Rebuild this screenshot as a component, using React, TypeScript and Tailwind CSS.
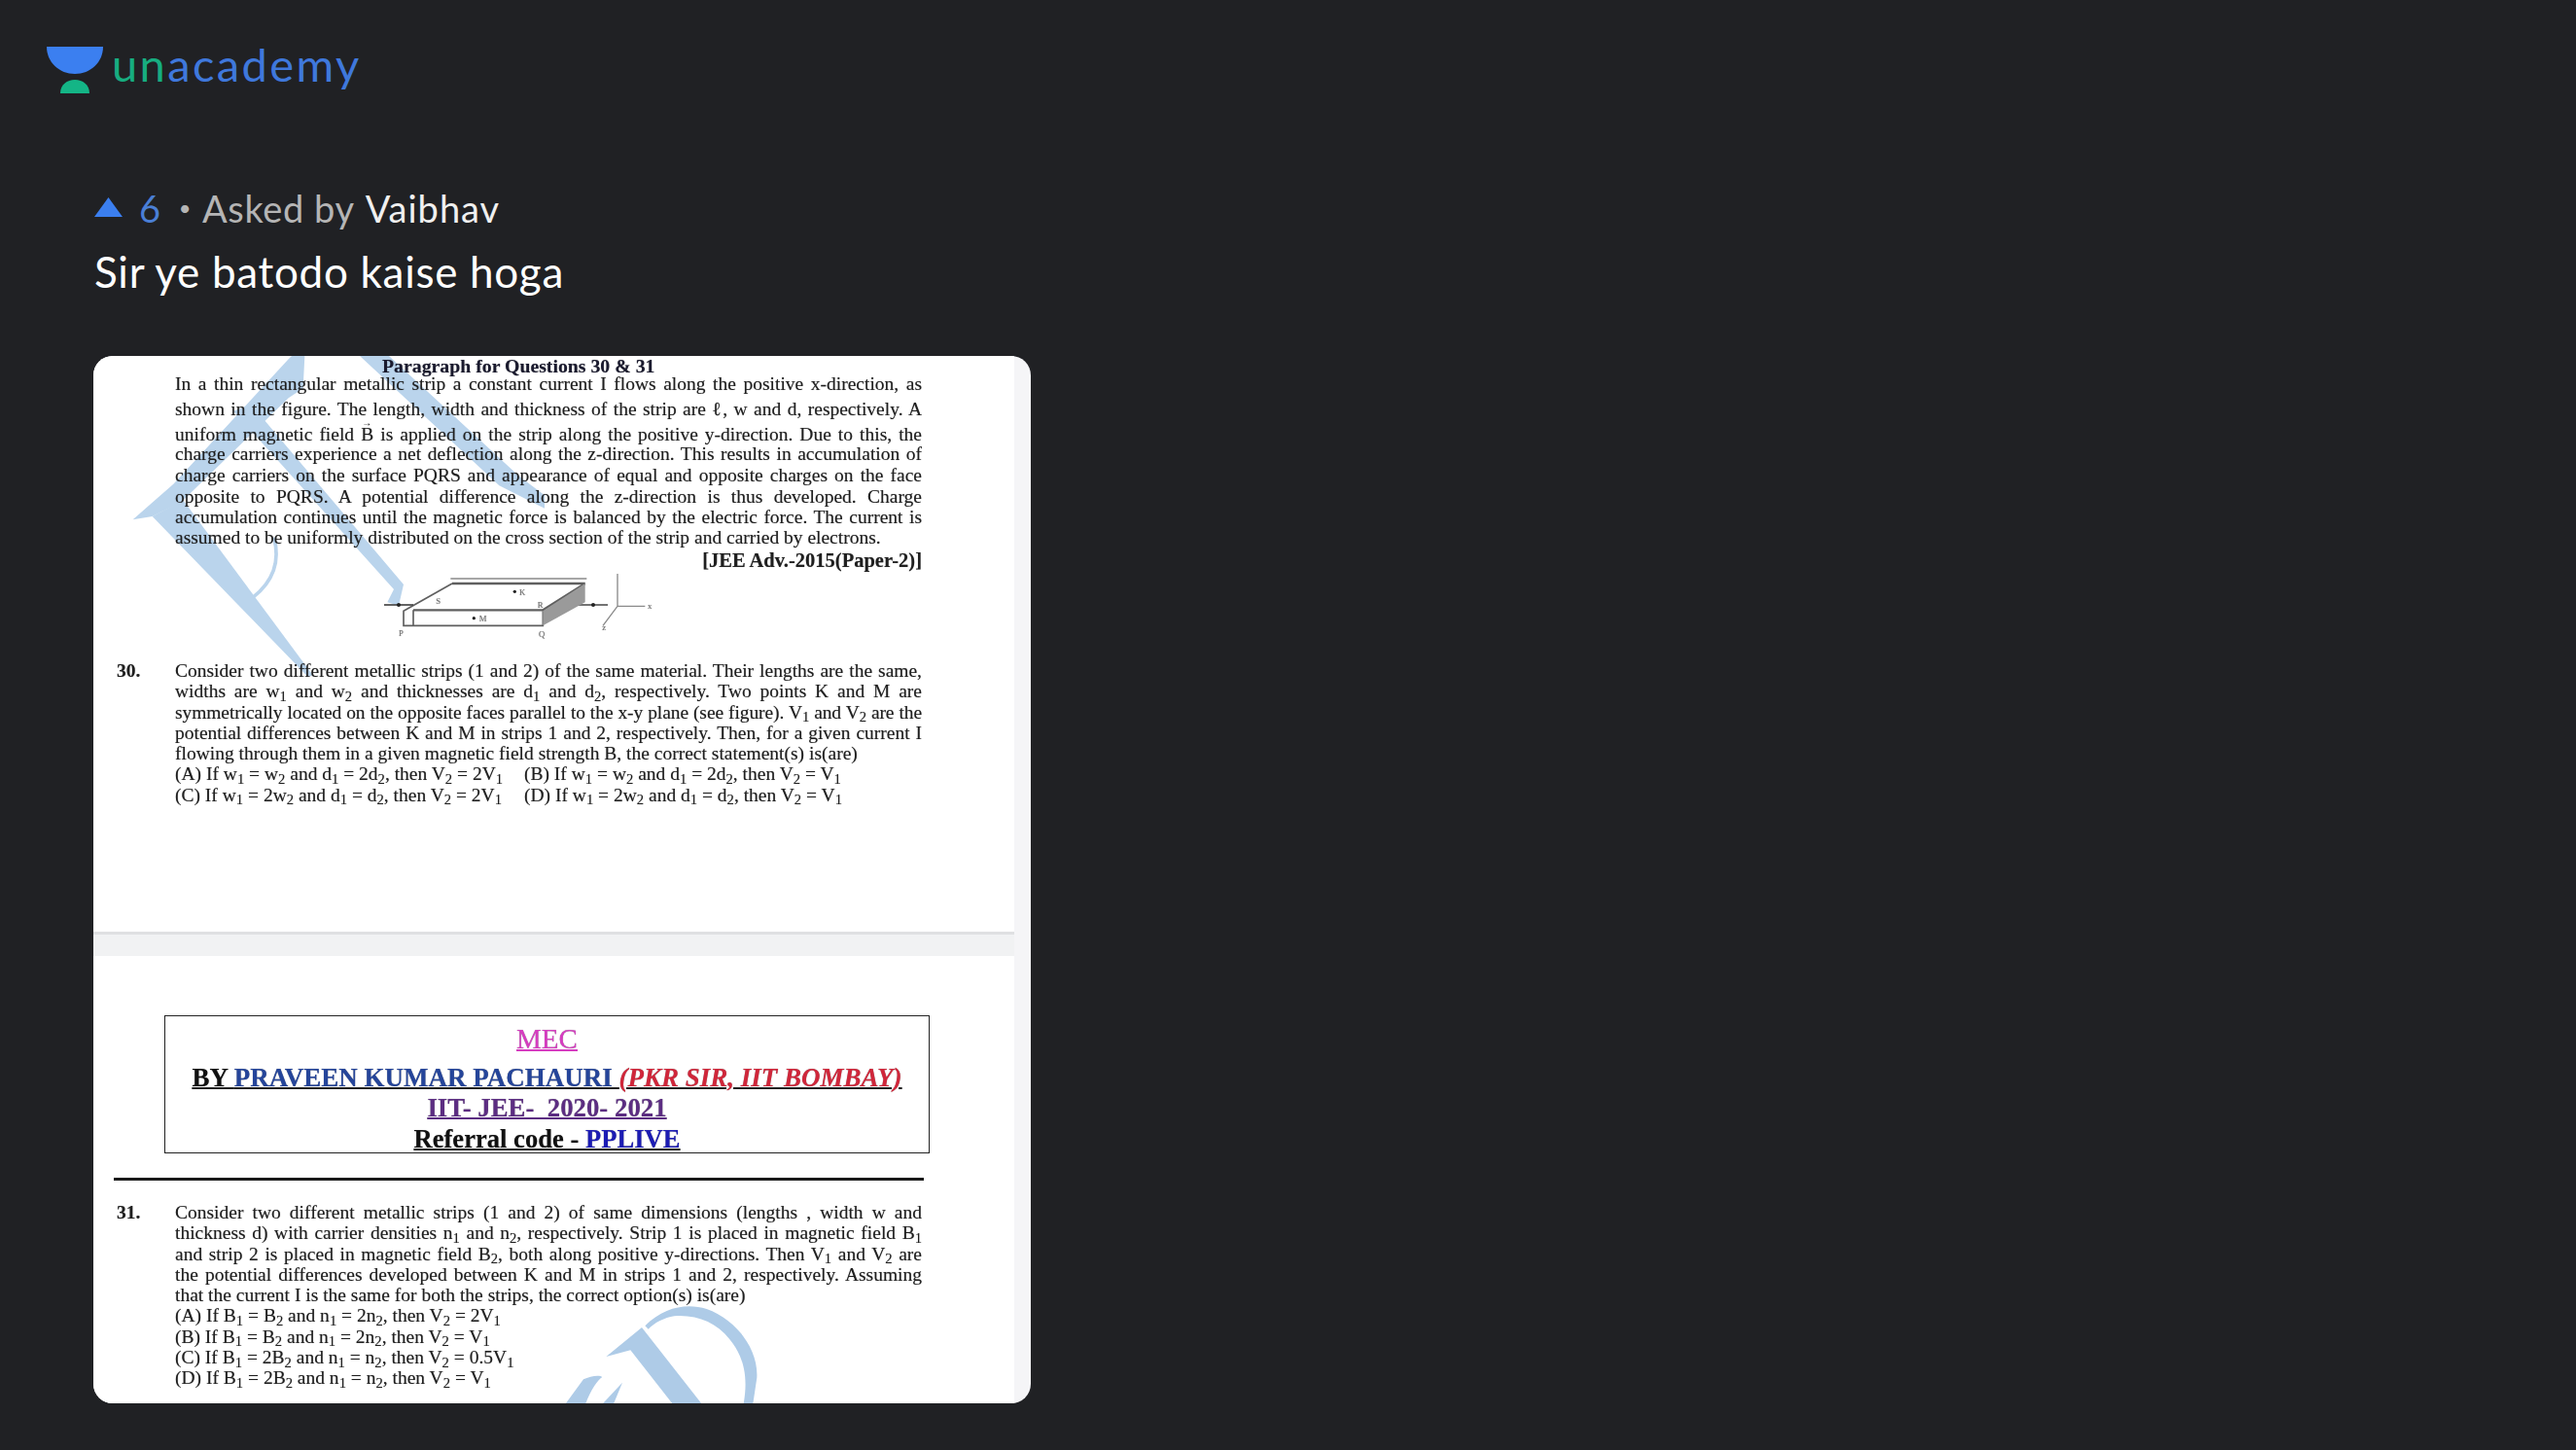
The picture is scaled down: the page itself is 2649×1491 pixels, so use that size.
import type { ReactNode } from "react";

const S1 = () => <sub>1</sub>;
const S2 = () => <sub>2</sub>;

function Just({ children, className = "" }: { children: ReactNode; className?: string }) {
  return <p className={`whitespace-nowrap text-justify [text-align-last:justify] ${className}`}>{children}</p>;
}

function Logo() {
  return (
    <div className="flex items-start gap-[9px]">
      <svg width="58" height="49" viewBox="0 0 58 49" className="shrink-0">
        <path d="M0 1 H58 C58 17 45 29 29 29 C13 29 0 17 0 1 Z" fill="#3b7ff0" />
        <path d="M14 49 C14 40 21 35 29 35 C37 35 44 40 44 49 Z" fill="#14b586" />
      </svg>
      <div className="mt-[-5px] font-['Lato',sans-serif] text-[47px] leading-[49px] tracking-[2.4px]">
        <span className="text-[#17ad80]">un</span>
        <span className="text-[#3f78dc]">academy</span>
      </div>
    </div>
  );
}

function TopWatermark() {
  return (
    <svg
      width="560"
      height="340"
      viewBox="0 0 1680 1020"
      className="absolute left-[4px] top-0"
      fill="#bad4ec"
    >
      <path d="M110 505 L235 395 L590 10 L600 0 L640 0 L635 100 L590 130 L260 450 L170 495 Z" />
      <path d="M170 495 L265 445 L495 755 L665 985 L650 990 Z" />
      <path d="M480 745 Q575 670 545 560" fill="none" stroke="#bad4ec" strokeWidth="11" />
      <path d="M420 170 L475 150 L945 705 L930 770 L895 760 L915 720 Z" />
      <path d="M810 0 L900 0 L1300 370 L1380 430 L1380 470 L1240 400 Z" />
    </svg>
  );
}

function BottomWatermark() {
  return (
    <svg
      width="240"
      height="130"
      viewBox="0 0 720 390"
      className="absolute left-[464px] bottom-[-7px]"
      fill="#aecbe7"
    >
      <path d="M310 130 C370 70 440 60 500 78 C590 110 660 200 655 290 L640 390 L610 390 C630 300 620 230 570 170 C530 120 470 95 400 100 C370 105 340 120 320 140 Z" />
      <path d="M190 225 L300 135 L500 390 L410 390 L265 205 Z" />
      <path d="M65 370 L120 295 C140 285 170 280 178 288 C160 300 135 340 120 390 L70 390 Z" />
      <path d="M170 380 L240 305 L205 390 L175 390 Z" />
    </svg>
  );
}

function StripFigure() {
  return (
    <svg width="320" height="80" viewBox="0 30 960 240" className="ml-[190px] mt-[4px]">
      <g fill="none" stroke="#5f5f5f" strokeWidth="5">
        <path d="M280 45 H700" strokeWidth="4" stroke="#8a8a8a" />
        <path d="M285 60 H695" strokeWidth="7" />
        <path d="M285 60 L135 145 V190 H565 V145" />
        <path d="M165 142 H565 L695 60" strokeWidth="7" />
        <path d="M165 142 V190" />
        <path d="M75 126 H165" stroke="#444" />
        <path d="M640 126 H765" stroke="#444" />
        <path d="M795 20 V130 L750 190 M795 130 H880" stroke="#8a8a8a" strokeWidth="4" />
      </g>
      <path d="M565 145 L695 60 V118 L565 190 Z" fill="#9a9a9a" />
      <g fill="#222">
        <circle cx="120" cy="126" r="6" />
        <circle cx="720" cy="126" r="6" />
        <circle cx="478" cy="85" r="5" />
        <circle cx="352" cy="167" r="5" />
      </g>
      <g fill="#777" fontFamily="'Liberation Serif',serif" fontSize="26">
        <text x="492" y="96">K</text>
        <text x="368" y="176">M</text>
        <text x="120" y="222">P</text>
        <text x="552" y="224">Q</text>
        <text x="548" y="134">R</text>
        <text x="235" y="124">S</text>
        <text x="888" y="138">x</text>
        <text x="748" y="205">z</text>
      </g>
    </svg>
  );
}

export default function App() {
  return (
    <div className="h-[1491px] bg-[#202124] pl-[48px] pt-[47px] font-['Lato',sans-serif]">
      <Logo />

      <div className="ml-[49px] mt-[96px] flex h-[44px] items-center text-[38px] leading-[44px] tracking-[0.6px]">
        <svg width="29" height="20" viewBox="0 0 29 20" className="mt-[-3px] shrink-0">
          <path d="M14.5 0 L29 20 H0 Z" fill="#3b7ff0" />
        </svg>
        <span className="ml-[17px] text-[#4a7fd6]">6</span>
        <span className="ml-[18px] text-[22px] text-[#b5b5b5]">•</span>
        <span className="ml-[11px] text-[#b5b5b5]">Asked by</span>
        <span className="ml-[11px] tracking-[1px] text-[#f0f0f0]">Vaibhav</span>
      </div>

      <h1 className="ml-[49px] mt-[17px] text-[44px] font-normal leading-[52px] tracking-[0.7px] text-white">
        Sir ye batodo kaise hoga
      </h1>

      <div className="ml-[48px] mt-[61px] flex h-[1077px] w-[964px] overflow-hidden rounded-[20px] bg-[#f5f5f7]">
        <div className="w-[947px] shrink-0 font-['Liberation_Serif',serif] text-[19.5px] leading-[21.3px] text-[#1f1f1f] blur-[0.6px] [text-shadow:0_0_1px_rgba(0,0,0,0.45)]">
          <section className="relative h-[592px] overflow-hidden bg-white">
            <TopWatermark />
            <div className="relative ml-[84px] w-[768px]">
              <p className="h-[20px] pl-[213px] text-[19.8px] font-bold leading-[20px] text-[#1a1a2e]">
                Paragraph for Questions 30 &amp; 31
              </p>
              <div className="leading-[20px]">
                <Just className="mt-[-1px]">In a thin rectangular metallic strip a constant current I flows along the positive x-direction, as</Just>
                <Just className="mt-[6px]">shown in the figure. The length, width and thickness of the strip are ℓ, w and d, respectively. A</Just>
                <Just className="mt-[6px]">
                  uniform magnetic field{" "}
                  <span className="relative">
                    B<span className="absolute left-px top-[-11px] text-[10px]">→</span>
                  </span>{" "}
                  is applied on the strip along the positive y-direction. Due to this, the
                </Just>
                <Just>charge carriers experience a net deflection along the z-direction. This results in accumulation of</Just>
                <Just className="mt-[2px]">charge carriers on the surface PQRS and appearance of equal and opposite charges on the face</Just>
                <Just className="mt-[2px]">opposite to PQRS. A potential difference along the z-direction is thus developed. Charge</Just>
                <Just className="mt-px">accumulation continues until the magnetic force is balanced by the electric force. The current is</Just>
                <p className="mt-px">assumed to be uniformly distributed on the cross section of the strip and carried by electrons.</p>
                <p className="mt-[3px] text-right text-[20.5px] font-bold">[JEE Adv.-2015(Paper-2)]</p>
              </div>
              <StripFigure />
            </div>
            <div className="relative mt-[9px] flex">
              <span className="w-[84px] shrink-0 pl-[24px] font-bold">30.</span>
              <div className="w-[768px]">
                <Just>Consider two different metallic strips (1 and 2) of the same material. Their lengths are the same,</Just>
                <Just>widths are w<S1 /> and w<S2 /> and thicknesses are d<S1 /> and d<S2 />, respectively. Two points K and M are</Just>
                <Just className="tracking-[-0.08px]">symmetrically located on the opposite faces parallel to the x-y plane (see figure). V<S1 /> and V<S2 /> are the</Just>
                <Just>potential differences between K and M in strips 1 and 2, respectively. Then, for a given current I</Just>
                <p>flowing through them in a given magnetic field strength B, the correct statement(s) is(are)</p>
                <div className="flex">
                  <p className="w-[359px]">(A) If w<S1 /> = w<S2 /> and d<S1 /> = 2d<S2 />, then V<S2 /> = 2V<S1 /></p>
                  <p>(B) If w<S1 /> = w<S2 /> and d<S1 /> = 2d<S2 />, then V<S2 /> = V<S1 /></p>
                </div>
                <div className="flex">
                  <p className="w-[359px]">(C) If w<S1 /> = 2w<S2 /> and d<S1 /> = d<S2 />, then V<S2 /> = 2V<S1 /></p>
                  <p>(D) If w<S1 /> = 2w<S2 /> and d<S1 /> = d<S2 />, then V<S2 /> = V<S1 /></p>
                </div>
              </div>
            </div>
          </section>

          <div className="h-[25px] border-t-[3px] border-[#dfe0e2] bg-[#f1f2f3]" />

          <section className="relative h-[460px] overflow-hidden bg-white pt-[61px]">
            <BottomWatermark />
            <div className="relative ml-[73px] h-[142px] w-[787px] border-[1.5px] border-[#222] text-center font-bold">
              <p className="mt-[7px] text-[29px] font-normal leading-[32px] text-[#d63cc0] underline decoration-2">MEC</p>
              <p className="mt-[9px] text-[27px] leading-[30px] underline decoration-2">
                <span className="text-[#111]">BY </span>
                <span className="text-[#25459a]">PRAVEEN KUMAR PACHAURI </span>
                <span className="italic text-[#d0263a]">(PKR SIR, IIT BOMBAY)</span>
              </p>
              <p className="mt-px text-[26.8px] leading-[30px] text-[#5c2d82] underline decoration-2">IIT- JEE-&nbsp; 2020- 2021</p>
              <p className="mt-[2px] text-[26.6px] leading-[30px] underline decoration-2">
                <span className="text-[#111]">Referral code - </span>
                <span className="text-[#1c1cb4]">PPLIVE</span>
              </p>
            </div>
            <div className="relative ml-[21px] mt-[25px] h-[3px] w-[833px] bg-[#1a1a1a]" />
            <div className="relative mt-[22px] flex">
              <span className="w-[84px] shrink-0 pl-[24px] font-bold">31.</span>
              <div className="w-[768px]">
                <Just>Consider two different metallic strips (1 and 2) of same dimensions (lengths , width w and</Just>
                <Just>thickness d) with carrier densities n<S1 /> and n<S2 />, respectively. Strip 1 is placed in magnetic field B<S1 /></Just>
                <Just>and strip 2 is placed in magnetic field B<S2 />, both along positive y-directions. Then V<S1 /> and V<S2 /> are</Just>
                <Just>the potential differences developed between K and M in strips 1 and 2, respectively. Assuming</Just>
                <p>that the current I is the same for both the strips, the correct option(s) is(are)</p>
                <p>(A) If B<S1 /> = B<S2 /> and n<S1 /> = 2n<S2 />, then V<S2 /> = 2V<S1 /></p>
                <p>(B) If B<S1 /> = B<S2 /> and n<S1 /> = 2n<S2 />, then V<S2 /> = V<S1 /></p>
                <p>(C) If B<S1 /> = 2B<S2 /> and n<S1 /> = n<S2 />, then V<S2 /> = 0.5V<S1 /></p>
                <p>(D) If B<S1 /> = 2B<S2 /> and n<S1 /> = n<S2 />, then V<S2 /> = V<S1 /></p>
              </div>
            </div>
          </section>
        </div>
      </div>
    </div>
  );
}
